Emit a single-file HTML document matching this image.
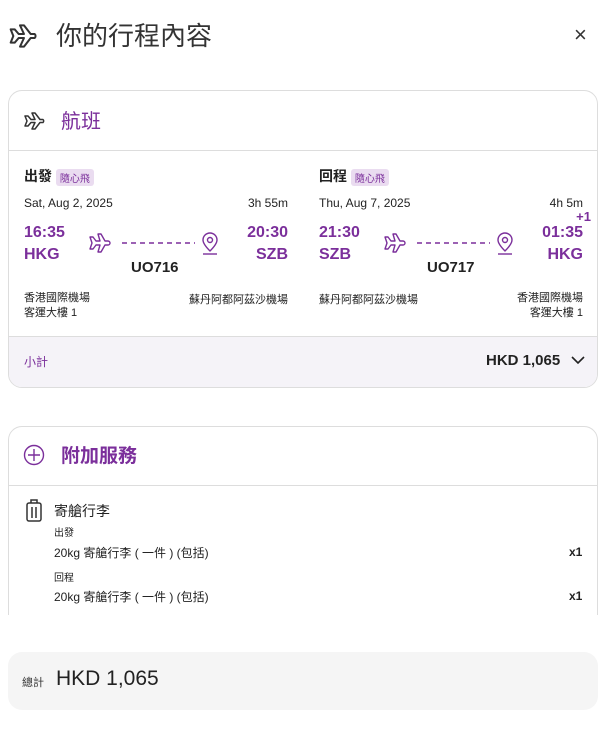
<!DOCTYPE html>
<html><head><meta charset="utf-8"><style>
*{box-sizing:border-box;margin:0;padding:0}
body{width:600px;height:749px;background:#fff;font-family:"Liberation Sans","Noto Sans CJK TC",sans-serif;color:#222;position:relative;overflow:hidden}
.a{position:absolute;white-space:nowrap}
.p{color:#7b2f9b}
.b{font-weight:bold}
.card{position:absolute;left:8px;width:590px;border:1px solid #ddd;border-radius:14px;background:#fff;overflow:hidden}
.badge{display:inline-block;background:#eadcf0;color:#7b2f9b;font-size:10px;padding:1px 4px;border-radius:3px;vertical-align:middle}
.r{text-align:right}
</style></head><body>
<svg class="a" style="left:8px;top:20px" width="32" height="32" viewBox="0 0 24 24" fill="none" stroke="#333" stroke-width="1.5" stroke-linejoin="round"><path d="M2 7l3 0 3 3.5h4L9 4h3l5 6.5h3a2 2 0 0 1 0 3h-3L12 20H9l3-6.5H8L5 17H2l2-5z"/></svg>
<div class="a" style="left:56px;top:16px;font-size:26px;color:#333">你的行程內容</div>
<div class="a" style="left:574px;top:22px;font-size:22px;color:#333">×</div>

<div class="card" style="top:90px;height:298px">
 <svg class="a" style="left:14px;top:18px" width="24" height="24" viewBox="0 0 24 24" fill="none" stroke="#333" stroke-width="1.5" stroke-linejoin="round"><path d="M2 7l3 0 3 3.5h4L9 4h3l5 6.5h3a2 2 0 0 1 0 3h-3L12 20H9l3-6.5H8L5 17H2l2-5z"/></svg>
 <div class="a p" style="left:52px;top:14px;font-size:20px">航班</div>
 <div class="a" style="left:0;top:59px;width:590px;border-top:1px solid #ddd"></div>
 <!-- outbound -->
 <div class="a b" style="left:15px;top:75px;font-size:14px">出發 <span class="badge" style="font-weight:normal">隨心飛</span></div>
 <div class="a" style="left:15px;top:105px;font-size:12px">Sat, Aug 2, 2025</div>
 <div class="a r" style="right:309px;top:105px;font-size:12px">3h 55m</div>
 <div class="a p b" style="left:15px;top:133px;font-size:16px">16:35</div>
 <div class="a p b" style="left:15px;top:155px;font-size:16px">HKG</div>
 <div class="a p b r" style="right:309px;top:133px;font-size:16px">20:30</div>
 <div class="a p b r" style="right:309px;top:155px;font-size:16px">SZB</div>
 <svg class="a" style="left:80px;top:140px" width="140" height="26" viewBox="0 0 140 26" fill="none" stroke="#7b2f9b" stroke-width="1.4" stroke-linejoin="round"><path d="M1 6h3l3 4h4L9 3h3l4 7h3a2 2 0 0 1 0 4h-3l-4 7H9l2-7H7l-3 4H1l2-6z"/><path d="M33 12h73" stroke-dasharray="5 4"/><path d="M121 20c-5-5-7-8-7-11a7 7 0 0 1 14 0c0 3-2 6-7 11z"/><circle cx="121" cy="9" r="2.5"/><path d="M114 23h14"/></svg>
 <div class="a b" style="left:122px;top:168px;font-size:15px">UO716</div>
 <div class="a" style="left:15px;top:200px;font-size:11px;line-height:15px">香港國際機場<br>客運大樓 1</div>
 <div class="a r" style="right:309px;top:200px;font-size:11px">蘇丹阿都阿茲沙機場</div>
 <!-- return -->
 <div class="a b" style="left:310px;top:75px;font-size:14px">回程 <span class="badge" style="font-weight:normal">隨心飛</span></div>
 <div class="a" style="left:310px;top:105px;font-size:12px">Thu, Aug 7, 2025</div>
 <div class="a r" style="right:14px;top:105px;font-size:12px">4h 5m</div>
 <div class="a p b r" style="right:6px;top:118px;font-size:13px">+1</div>
 <div class="a p b" style="left:310px;top:133px;font-size:16px">21:30</div>
 <div class="a p b" style="left:310px;top:155px;font-size:16px">SZB</div>
 <div class="a p b r" style="right:14px;top:133px;font-size:16px">01:35</div>
 <div class="a p b r" style="right:14px;top:155px;font-size:16px">HKG</div>
 <svg class="a" style="left:375px;top:140px" width="140" height="26" viewBox="0 0 140 26" fill="none" stroke="#7b2f9b" stroke-width="1.4" stroke-linejoin="round"><path d="M1 6h3l3 4h4L9 3h3l4 7h3a2 2 0 0 1 0 4h-3l-4 7H9l2-7H7l-3 4H1l2-6z"/><path d="M33 12h73" stroke-dasharray="5 4"/><path d="M121 20c-5-5-7-8-7-11a7 7 0 0 1 14 0c0 3-2 6-7 11z"/><circle cx="121" cy="9" r="2.5"/><path d="M114 23h14"/></svg>
 <div class="a b" style="left:418px;top:168px;font-size:15px">UO717</div>
 <div class="a" style="left:310px;top:200px;font-size:11px">蘇丹阿都阿茲沙機場</div>
 <div class="a r" style="right:14px;top:200px;font-size:11px;line-height:15px">香港國際機場<br>客運大樓 1</div>
 <!-- subtotal -->
 <div class="a" style="left:0;top:245px;width:590px;height:53px;background:#f5f3f8;border-top:1px solid #ddd"></div>
 <div class="a p" style="left:15px;top:262px;font-size:12px">小計</div>
 <div class="a b" style="left:477px;top:261px;font-size:15px">HKD 1,065</div>
 <svg class="a" style="left:562px;top:264px" width="14" height="10" viewBox="0 0 14 10" fill="none" stroke="#222" stroke-width="1.6"><path d="M1 2l6 6 6-6"/></svg>
</div>

<div class="card" style="top:426px;height:230px">
 <svg class="a" style="left:14px;top:17px" width="22" height="22" viewBox="0 0 22 22" fill="none" stroke="#7b2f9b" stroke-width="1.4"><circle cx="11" cy="11" r="9.5"/><path d="M11 5v12M5 11h12"/></svg>
 <div class="a p b" style="left:52px;top:14px;font-size:19px">附加服務</div>
 <div class="a" style="left:0;top:58px;width:590px;border-top:1px solid #ddd"></div>
 <svg class="a" style="left:16px;top:72px" width="18" height="24" viewBox="0 0 18 24" fill="none" stroke="#333" stroke-width="1.5"><rect x="2" y="4" width="14" height="18" rx="2"/><path d="M6 4V1h6v3M7 8v11M11 8v11"/></svg>
 <div class="a" style="left:45px;top:74px;font-size:14px">寄艙行李</div>
 <div class="a" style="left:45px;top:97px;font-size:10px">出發</div>
 <div class="a" style="left:45px;top:117px;font-size:12px">20kg 寄艙行李 ( 一件 ) (包括)</div>
 <div class="a b" style="left:560px;top:118px;font-size:12px">x1</div>
 <div class="a" style="left:45px;top:142px;font-size:10px">回程</div>
 <div class="a" style="left:45px;top:161px;font-size:12px">20kg 寄艙行李 ( 一件 ) (包括)</div>
 <div class="a b" style="left:560px;top:162px;font-size:12px">x1</div>
</div>
<div class="a" style="left:0;top:615px;width:600px;height:134px;background:#fff"></div>

<div class="a" style="left:8px;top:652px;width:590px;height:58px;background:#f5f5f5;border-radius:14px"></div>
<div class="a" style="left:22px;top:674px;font-size:11px;color:#333">總計</div>
<div class="a" style="left:56px;top:667px;font-size:21px;color:#222">HKD 1,065</div>
</body></html>
